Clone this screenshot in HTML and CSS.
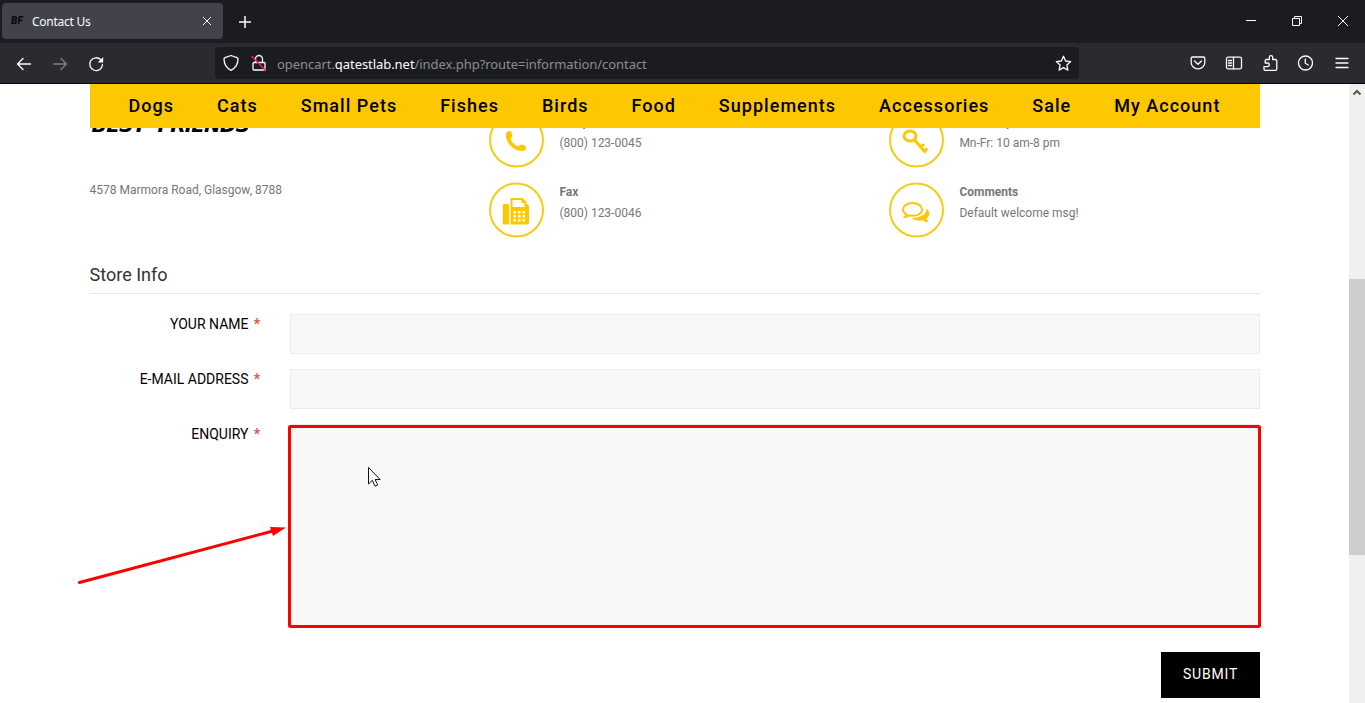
FILE: index.html
```html
<!DOCTYPE html>
<html lang="en">
<head>
<meta charset="utf-8">
<title>Contact Us</title>
<link rel="stylesheet" href="styles.css">
</head>
<body>
<header class="tabs">
  <div class="tab">
    <span class="favicon">BF</span>
    <span class="tab-title">Contact Us</span>
    <svg class="tab-close" width="10" height="10" viewBox="0 0 10 10"><path d="M1 1l8 8M9 1l-8 8"/></svg>
  </div>
  <svg class="new-tab" width="14" height="14" viewBox="0 0 14 14"><path d="M7 1v12M1 7h12"/></svg>
  <div class="win">
    <svg width="46" height="42" viewBox="0 0 46 42"><path d="M18 20.5h10"/></svg>
    <svg width="46" height="42" viewBox="0 0 46 42"><path d="M18.5 18.5h7v7h-7zM20.5 18.5v-2h7v7h-2"/></svg>
    <svg width="46" height="42" viewBox="0 0 46 42"><path d="M18 16l10 10M28 16l-10 10"/></svg>
  </div>
</header>
<div class="toolbar">
  <div class="history">
    <svg width="16" height="16" viewBox="0 0 16 16"><path d="M14.500 8H1.500M7 2.500L1.500 8 7 13.500"/></svg>
    <svg class="dim" width="16" height="16" viewBox="0 0 16 16"><path d="M1.500 8h13M9 2.500L14.500 8 9 13.500"/></svg>
    <svg width="16" height="16" viewBox="0 0 16 16"><path d="M14.500 8.500A6.400 6.400 0 1 1 12.800 3.800"/><path class="solid" d="M15.200 1v5.500H9.700z"/></svg>
  </div>
  <div class="urlbar">
    <svg width="16" height="18" viewBox="0 0 16 18"><path d="M8 1.500l6 2.100c.8.300 1 .8 1 1.500 0 5-2.500 9-7 11.300C3.500 14.100 1 10.100 1 5.100c0-.7.200-1.200 1-1.500z"/></svg>
    <svg class="lock" width="16" height="18" viewBox="0 0 16 18"><path d="M4.500 8V5a3.500 3.500 0 0 1 7 0v3M3 8.500h10c.6 0 1 .4 1 1V15c0 .6-.4 1-1 1H3c-.6 0-1-.4-1-1V9.500c0-.6.400-1 1-1z"/><path class="slash" d="M1 2.500l13.500 14"/></svg>
    <span class="url">opencart.<b>qatestlab.net</b>/index.php?route=information/contact</span>
    <svg width="17" height="17" viewBox="0 0 17 17"><path d="M8.500 1.300l2.100 4.700 5.100.600-3.800 3.500 1 5-4.400-2.500-4.400 2.500 1-5L1.300 6.600l5.100-.6z"/></svg>
  </div>
  <div class="tools">
    <svg width="16" height="16" viewBox="0 0 16 16"><path d="M2.500 2h11c.7 0 1.300.5 1.300 1.300v4.200a6.800 6.300 0 0 1-13.600 0V3.300C1.200 2.500 1.800 2 2.500 2zM4.500 6L8 9.300 11.500 6"/></svg>
    <svg width="18" height="16" viewBox="0 0 18 16"><path d="M3 2.200h12c.9 0 1.500.6 1.500 1.500v8.600c0 .9-.6 1.500-1.500 1.500H3c-.9 0-1.500-.6-1.500-1.500V3.700c0-.9.600-1.500 1.500-1.500zM8.500 2v12M3.500 5.500h3M3.500 8h3M3.500 10.500h3"/></svg>
    <svg width="16" height="18" viewBox="0 0 16 18"><path d="M3 16.300h10.500c.8 0 1.300-.5 1.300-1.300V6.800c0-.8-.5-1.300-1.300-1.300H10.700V3.300a1.700 1.700 0 0 0-3.400 0v2.200H4.500c-.8 0-1.300.5-1.300 1.300V9h2.300a1.800 1.800 0 0 1 0 3.600H2V15.300c0 .6.400 1 1 1z"/></svg>
    <svg width="16" height="16" viewBox="0 0 16 16"><circle cx="8.500" cy="8" r="7"/><path d="M8.300 4v4.200l3 1.800"/></svg>
    <svg width="14" height="14" viewBox="0 0 14 14"><path d="M1 2.500h12M1 7h12M1 11.500h12"/></svg>
  </div>
</div>
<div class="viewport">
  <nav class="nav">
    <a>Dogs</a><a>Cats</a><a>Small Pets</a><a>Fishes</a><a>Birds</a><a>Food</a><a>Supplements</a><a>Accessories</a><a>Sale</a><a>My Account</a>
  </nav>
  <main class="page">
    <section class="info">
      <div class="store">
        <div class="logo"><span>BEST</span><span>FRIENDS</span></div>
        <address>4578 Marmora Road, Glasgow, 8788</address>
      </div>
      <div class="contacts">
        <div class="contact">
          <svg class="badge" width="56" height="56" viewBox="0 0 56 56"><circle cx="28" cy="28" r="26.500"/><path d="M17.500 21c1.500-2 4-2.500 5-1.500.8 1.500 1.300 3 1.500 4.700.1 1-2 1.600-1.800 2.800 1.200 3.500 4 6.300 7.500 7.500 1 .200 1.800-2 2.900-1.900 1.500.3 3.300.8 4.500 1.500.6 1.300.2 3.600-1.500 4.600C28.500 40.500 16 32.500 17.500 21z"/></svg>
          <div><strong>Telephone</strong><p>(800) 123-0045</p></div>
        </div>
        <div class="contact">
          <svg class="badge" width="56" height="56" viewBox="0 0 56 56"><circle cx="28" cy="28" r="26.500"/><path fill-rule="evenodd" d="M16 22h3c1 0 1.500.5 1.500 1.500V41c0 1-.5 1.500-1.500 1.500h-3c-1.200 0-1.800-.6-1.800-1.800V23.800c0-1.200.6-1.800 1.800-1.800zM22 16h12l4 4v2c1.700.3 2.500 1 2.500 2.500V40c0 1.700-.8 2.500-2.500 2.500H22zM24 18v7h12v-4h-3v-3zM25 29v2.500h2.500v-2.500zM29.500 29v2.500h2.500v-2.500zM34 29v2.500h2.500v-2.500zM25 33v2.500h2.500v-2.500zM29.500 33v2.500h2.500v-2.500zM34 33v2.500h2.500v-2.500zM25 37v2.500h2.500V37zM29.500 37v2.500h2.500V37zM34 37v2.500h2.500V37z"/></svg>
          <div><strong>Fax</strong><p>(800) 123-0046</p></div>
        </div>
      </div>
      <div class="contacts">
        <div class="contact">
          <svg class="badge" width="56" height="56" viewBox="0 0 56 56"><circle cx="28" cy="28" r="26.500"/><g class="key"><ellipse cx="21.500" cy="24" rx="6" ry="5"/><path d="M26 28l11 12.500M31.500 36l4-4M35.500 40l3.500-3.500"/></g></svg>
          <div><strong>We are open</strong><p>Mn-Fr: 10 am-8 pm</p></div>
        </div>
        <div class="contact">
          <svg class="badge" width="56" height="56" viewBox="0 0 56 56"><circle cx="28" cy="28" r="26.500"/><path d="M38 26.500c4 3.500 3.300 7.500 0 10 .2 1.500 1 2.500 2.300 3.700-2.500.2-4.500-.6-6-2-4.500.8-8.300.2-11-2.200C32 35.500 38.500 32.500 38 26.500z"/><path class="bubble" d="M24 21c5.500 0 9.500 2.700 9.500 6.400s-4 6.400-9.500 6.400c-1 0-2-.1-3-.4-1.300 1-2.700 1.600-4.500 1.600 1-1 1.600-1.600 1.600-2.600-2.300-1.200-3.600-3-3.600-5 0-3.700 4-6.400 9.500-6.400z"/></svg>
          <div><strong>Comments</strong><p>Default welcome msg!</p></div>
        </div>
      </div>
    </section>
    <h3>Store Info</h3>
    <form class="form">
      <label>YOUR NAME <i>*</i></label><div class="field"></div>
      <label>E-MAIL ADDRESS <i>*</i></label><div class="field"></div>
      <label>ENQUIRY <i>*</i></label><div class="field area"></div>
      <button type="button">SUBMIT</button>
    </form>
  </main>
  <div class="scrollbar">
    <svg width="16" height="17" viewBox="0 0 16 17"><path d="M4.500 10.500L8 7l3.500 3.500"/></svg>
    <div class="thumb"></div>
  </div>
</div>
<svg class="marks" width="1365" height="703" viewBox="0 0 1365 703">
  <rect x="289.500" y="426.500" width="970" height="200" rx="1"/>
  <path class="line" d="M79.500 582.500L273 531"/>
  <path class="head" d="M286 527.500L270 527l3 9z"/>
  <path class="cursor" d="M368.500 467.500v16.500l3.800-3.700 2.700 5.900 2.700-1.200-2.600-5.500h5z"/>
</svg>
</body>
</html>
```
FILE: styles.css
```css
* { box-sizing: border-box; }
body {
  margin: 0;
  width: 1365px;
  height: 703px;
  overflow: hidden;
  display: flex;
  flex-direction: column;
  font-family: Roboto, "Liberation Sans", sans-serif;
  background: #fff;
}
svg { display: block; flex: none; fill: none; }
.tabs {
  height: 43px;
  display: flex;
  align-items: center;
  background: #1b1c21;
  color: #fbfbfe;
  font: 12px "Noto Sans", sans-serif;
}
.tabs svg { stroke: #fbfbfe; stroke-width: 1; }
.tab {
  width: 221px;
  height: 36px;
  margin: 0 0 1px 2px;
  padding: 0 11px 0 9px;
  display: flex;
  align-items: center;
  border-radius: 4px;
  background: #42424c;
}
.favicon {
  width: 21px;
  padding-bottom: 2px;
  color: #08070c;
  font: italic 900 10px Roboto, sans-serif;
  letter-spacing: .3px;
}
.tab-title { flex: 1; padding-top: 1px; letter-spacing: -.25px; }
.tabs .new-tab { margin-left: 15px; stroke-width: 1.500; }
.win { display: flex; margin-left: auto; align-self: flex-start; width: 137px; }
.toolbar {
  height: 41px;
  display: flex;
  align-items: center;
  background: #2a2b31;
  border-bottom: 1px solid #050507;
}
.toolbar svg { stroke: #fbfbfe; stroke-width: 1.300; stroke-linejoin: round; stroke-linecap: round; }
.toolbar svg .solid { fill: #fbfbfe; stroke: none; }
.toolbar .dim { opacity: .4; }
.history { width: 215px; padding: 1px 0 0 16px; display: flex; gap: 20px; }
.urlbar {
  width: 864px;
  height: 32px;
  padding: 0 7.500px 0 8px;
  display: flex;
  align-items: center;
  border-radius: 4px;
  background: #1b1c20;
}
.lock { margin: 0 10px 0 12px; }
.toolbar svg .slash { stroke: #e22850; stroke-width: 1.600; }
.url {
  flex: 1;
  padding-top: 2px;
  color: #8c8c90;
  font: 13px "Noto Sans", sans-serif;
  letter-spacing: -.055px;
}
.url b { color: #fbfbfe; font-weight: 400; }
.tools {
  flex: 1;
  padding: 0 16px 0 111px;
  display: flex;
  align-items: center;
  gap: 19px;
}
.tools svg:last-child { margin-left: 3px; }
.viewport { position: relative; flex: 1; display: flex; overflow: hidden; }
.nav {
  position: absolute;
  left: 90px;
  top: 0;
  z-index: 2;
  width: 1170px;
  height: 44px;
  padding: 0 39.500px 1px 38.500px;
  display: flex;
  align-items: center;
  justify-content: space-between;
  background: #fdc800;
  color: #000;
  font-size: 18px;
  line-height: 43px;
  font-weight: 500;
  letter-spacing: 1.030px;
  white-space: nowrap;
}
.page { width: 1349px; padding: 0 89px 0 90px; }
.info { display: grid; grid-template-columns: 399.400px 400px 1fr; height: 180px; color: #777; font-size: 12px; }
.logo {
  height: 97px;
  padding: 26px 0 0 2px;
  display: flex;
  gap: 12px;
  color: #000;
  font: italic 900 20px/31px "DejaVu Sans", sans-serif;
  letter-spacing: -.7px;
}
.logo span:last-child { letter-spacing: -.9px; }
address { font-style: normal; line-height: 19px; letter-spacing: -.01px; }
.store, h3 { text-indent: -.4px; }
.contacts { padding-top: 28px; display: flex; flex-direction: column; gap: 14px; }
.contact { height: 56px; display: flex; gap: 14px; }
.contact strong { display: block; line-height: 21px; font-weight: 700; }
.contact p { margin: 0; line-height: 21px; }
.badge { fill: #fdc800; }
.badge circle { fill: none; stroke: #f6cb16; stroke-width: 2; }
.badge > * { transform: translateX(-.5px); }
.badge .key { fill: none; stroke: #fdc800; stroke-width: 3; }
.badge .bubble { fill: #fff; stroke: #fdc800; stroke-width: 2; }
h3 {
  margin: 0;
  height: 30px;
  border-bottom: 1px solid #e5e5e5;
  color: #333;
  font-size: 18px;
  font-weight: 400;
  line-height: 21px;
}
.form {
  padding-top: 20px;
  display: grid;
  grid-template-columns: 170px 970px;
  column-gap: 30px;
  row-gap: 15px;
}
label { text-align: right; font-size: 14px; line-height: 20px; color: #000; }
label i { font-style: normal; font-weight: 700; color: #d9564c; margin-left: 1.700px; }
.field { height: 40px; border: 1px solid #ebebeb; background: #f8f8f7; }
.area { height: 203px; }
button {
  grid-column: 2;
  justify-self: end;
  width: 99px;
  height: 46px;
  margin-top: 10px;
  padding: 0 0 2px;
  border: 0;
  background: #000;
  color: #fff;
  font: 400 14px Roboto, sans-serif;
  letter-spacing: .8px;
}
.scrollbar { width: 16px; background: #f0f0ef; }
.scrollbar svg { stroke: #555; stroke-width: 2; }
.thumb { height: 276px; margin-top: 178px; background: #cdcdcd; }
.marks { position: absolute; left: 0; top: 0; z-index: 3; stroke: #fd0000; stroke-width: 3; }
.line { stroke-linecap: round; }
.head { fill: #fd0000; stroke: none; }
.cursor { fill: #fff; stroke: #111; stroke-width: 1; }
```
